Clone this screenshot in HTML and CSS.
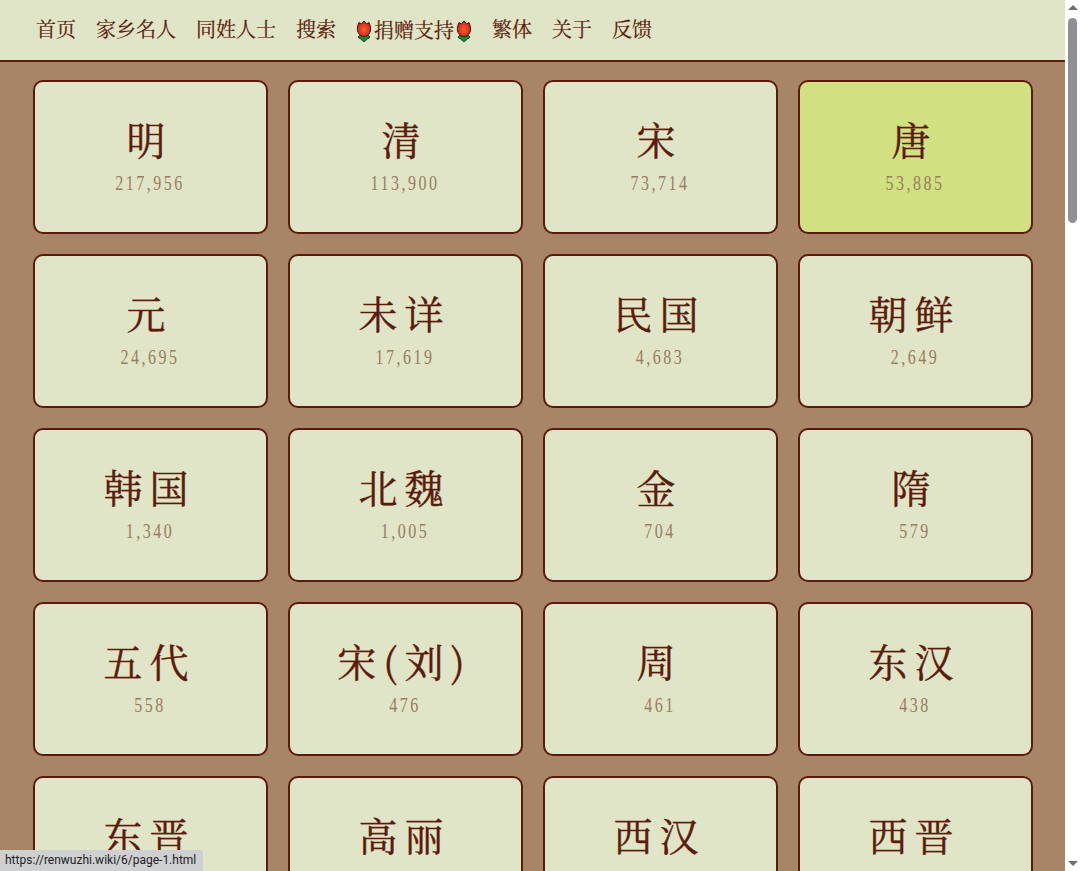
FILE: index.html
```html
<!DOCTYPE html>
<html lang="zh-CN">
<head>
<meta charset="utf-8">
<title>朝代</title>
<link rel="stylesheet" href="styles.css">
</head>
<body>
<svg class="defs" aria-hidden="true">
  <defs>
    <radialGradient id="petal" cx="50%" cy="55%" r="60%">
      <stop offset="0" stop-color="#f4632c"/>
      <stop offset=".65" stop-color="#e0301f"/>
      <stop offset="1" stop-color="#a81c14"/>
    </radialGradient>
    <symbol id="rose" viewBox="0 0 16 22">
      <path d="M8 14c-1 1-5 1-6 3 1 2 3 1.500 3.500 2.500C6 20.500 7 21.500 8 21.500s2-1 2.500-2C11 18.500 13 19 14 17c-1-2-5-2-6-3z" fill="#1c8a2c" stroke="#0f3a16" stroke-width="1"/>
      <path d="M3 2.500L5.500 4 8 1l2.500 3L13 2.500c2 4 2.200 8 .3 11-1.300 2-3.300 3-5.300 3s-4-1-5.300-3C.8 10.500 1 6.500 3 2.500z" fill="url(#petal)" stroke="#3a1410" stroke-width="1"/>
    </symbol>
  </defs>
</svg>
<div class="viewport">
  <div class="page">
    <nav class="nav">
      <a>首页</a><a>家乡名人</a><a>同姓人士</a><a>搜索</a>
      <a class="donate"><svg class="rose"><use href="#rose"/></svg><span class="donate-text">捐赠支持</span><svg class="rose"><use href="#rose"/></svg></a>
      <a>繁体</a><a>关于</a><a>反馈</a>
    </nav>
    <main class="grid">
      <a class="card"><span class="name">明</span><span class="count">217,956</span></a>
      <a class="card"><span class="name">清</span><span class="count">113,900</span></a>
      <a class="card"><span class="name">宋</span><span class="count">73,714</span></a>
      <a class="card active"><span class="name">唐</span><span class="count">53,885</span></a>
      <a class="card"><span class="name">元</span><span class="count">24,695</span></a>
      <a class="card"><span class="name">未详</span><span class="count">17,619</span></a>
      <a class="card"><span class="name">民国</span><span class="count">4,683</span></a>
      <a class="card"><span class="name">朝鲜</span><span class="count">2,649</span></a>
      <a class="card"><span class="name">韩国</span><span class="count">1,340</span></a>
      <a class="card"><span class="name">北魏</span><span class="count">1,005</span></a>
      <a class="card"><span class="name">金</span><span class="count">704</span></a>
      <a class="card"><span class="name">隋</span><span class="count">579</span></a>
      <a class="card"><span class="name">五代</span><span class="count">558</span></a>
      <a class="card"><span class="name">宋(刘)</span><span class="count">476</span></a>
      <a class="card"><span class="name">周</span><span class="count">461</span></a>
      <a class="card"><span class="name">东汉</span><span class="count">438</span></a>
      <a class="card"><span class="name">东晋</span><span class="count"></span></a>
      <a class="card"><span class="name">高丽</span><span class="count"></span></a>
      <a class="card"><span class="name">西汉</span><span class="count"></span></a>
      <a class="card"><span class="name">西晋</span><span class="count"></span></a>
    </main>
  </div>
  <div class="scrollbar">
    <span class="arrow up"></span>
    <span class="thumb"></span>
    <span class="arrow down"></span>
  </div>
</div>
<div class="status">https://renwuzhi.wiki/6/page-1.html</div>
</body>
</html>
```
FILE: styles.css
```css
* { box-sizing: border-box; }
html, body { margin: 0; height: 100%; overflow: hidden; }
body { font-family: "Noto Serif CJK SC", "Liberation Serif", "Noto Sans CJK SC", serif; color: #5c1a0b; }
.defs { position: absolute; width: 0; height: 0; }
.viewport { display: flex; height: 871px; }
.page { flex: 1; min-width: 0; overflow: hidden; background: #a88567; }
.nav { display: flex; align-items: center; gap: 20px; height: 62px; padding: 0 0 2px 36px; background: #dfe5c6; border-bottom: 2px solid #5c1a0b; font-size: 20px; line-height: 1; -webkit-text-stroke: .2px #5c1a0b; }
.donate { display: flex; align-items: center; gap: 2px; padding-top: 3px; }
.donate-text { margin-top: -1px; }
.rose { width: 16px; height: 22px; }
.grid { display: grid; grid-template-columns: repeat(4, 235px); grid-auto-rows: 154px; gap: 20px; padding: 18px 0 0 33px; }
.card { display: flex; flex-direction: column; align-items: center; justify-content: center; padding-bottom: 5px; background: #dfe5c6; border: 2px solid #5c1a0b; border-radius: 10px; }
.active { background: #d1e080; }
.name { padding-right: 2px; font-size: 39px; line-height: 44px; letter-spacing: 7px; -webkit-text-stroke: .4px #5c1a0b; }
.count { min-height: 20px; margin-top: 13px; padding-right: 1px; font-family: "Liberation Serif", serif; font-size: 16px; line-height: 20px; letter-spacing: 2.5px; color: #9a7c60; transform: scaleY(1.35); }
.scrollbar { flex: none; width: 15px; background: #fff; display: flex; flex-direction: column; align-items: center; }
.thumb { width: 9px; height: 205px; margin-top: 8px; border-radius: 5px; background: #8f8f95; }
.arrow { width: 0; height: 0; border-left: 5px solid transparent; border-right: 5px solid transparent; }
.up { margin-top: 5px; border-bottom: 5px solid #6f6f75; }
.down { margin-top: auto; margin-bottom: 5px; border-top: 5px solid #6f6f75; }
.status { position: fixed; left: 0; bottom: 0; width: 203px; height: 21px; padding: 2px 0 0 5px; background: #cfd0d2; border-top-right-radius: 4px; font: 12px/17px Roboto, sans-serif; color: #222; white-space: nowrap; }
```
